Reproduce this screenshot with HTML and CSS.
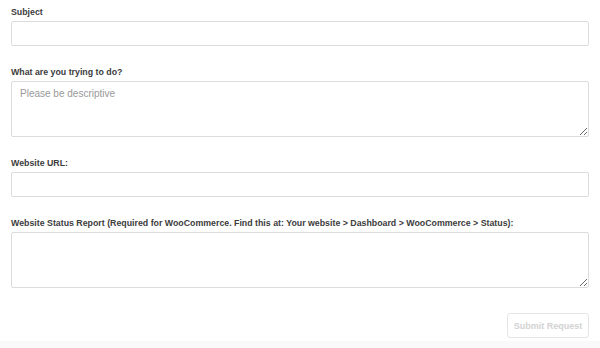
FILE: index.html
```html
<!DOCTYPE html>
<html lang="en">
<head>
    <meta charset="UTF-8">
    <meta name="viewport" content="width=device-width, initial-scale=1.0">
    <title>Support Request</title>
    <link rel="stylesheet" href="styles.css">
</head>
<body>
    <form class="request-form">
        <div class="field">
            <label for="subject">Subject</label>
            <input type="text" id="subject">
        </div>
        <div class="field">
            <label for="details">What are you trying to do?</label>
            <textarea id="details" placeholder="Please be descriptive"></textarea>
        </div>
        <div class="field">
            <label for="url">Website URL:</label>
            <input type="text" id="url">
        </div>
        <div class="field">
            <label for="status">Website Status Report (Required for WooCommerce. Find this at: Your website &gt; Dashboard &gt; WooCommerce &gt; Status):</label>
            <textarea id="status"></textarea>
        </div>
        <div class="actions">
            <button type="submit" class="submit-btn" disabled>Submit Request</button>
        </div>
    </form>
    <div class="bottom-strip"></div>
</body>
</html>
```

FILE: styles.css
```css
body {
    margin: 0;
    font-family: "Liberation Sans", Arial, sans-serif;
    color: #333;
    background: #fff;
}

.request-form {
    padding: 6px 11px 0;
}

.field {
    margin-bottom: 20px;
}

.field label {
    display: block;
    font-size: 8.8px;
    font-weight: bold;
    line-height: 12px;
    margin-bottom: 3px;
    color: #3c3c3c;
}

.field input,
.field textarea {
    display: block;
    box-sizing: border-box;
    width: 100%;
    border: 1px solid #dcdcdc;
    border-radius: 2px;
    background: #fff;
    font-family: "Liberation Sans", Arial, sans-serif;
    font-size: 10px;
    color: #333;
    margin: 0;
}

.field input {
    height: 25px;
    padding: 0 8px;
}

.field textarea {
    height: 56px;
    padding: 6px 8px;
}

.field textarea::placeholder {
    color: #999;
}

/* Submit row */
.actions {
    display: flex;
    justify-content: flex-end;
    padding-top: 5px;
}

.submit-btn {
    width: 82px;
    height: 25px;
    border: 1px solid #e6e6e6;
    border-radius: 3px;
    background: #fff;
    color: #d2d2d2;
    font-family: "Liberation Sans", Arial, sans-serif;
    font-size: 9px;
    font-weight: bold;
    padding: 0;
}

.bottom-strip {
    height: 7px;
    margin-top: 3px;
    background: #f9f9f9;
}
```
